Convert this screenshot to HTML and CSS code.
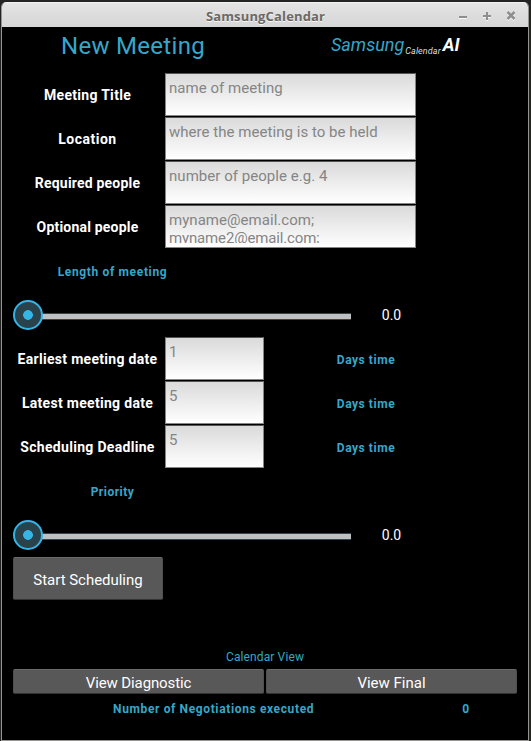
FILE: index.html
```html
<!DOCTYPE html>
<html lang="en">
<head>
<meta charset="utf-8">
<title>SamsungCalendar</title>
<link rel="stylesheet" href="styles.css">
</head>
<body>
<div class="window">
  <header class="titlebar">
    <span class="caption">SamsungCalendar</span>
    <svg class="controls" width="60" height="14" viewBox="0 0 60 14">
      <g class="glyph-light" transform="translate(0 1)"><path d="M2 8H10M26 7H34M30 3V11"/><path class="close" d="M50.500 3L57.500 10M57.500 3L50.500 10"/></g>
      <g class="glyph"><path d="M2 8H10M26 7H34M30 3V11"/><path class="close" d="M50.500 3L57.500 10M57.500 3L50.500 10"/></g>
    </svg>
  </header>
  <main class="content">
    <div class="heading">
      <h1>New Meeting</h1>
      <div class="brand"><i class="samsung">Samsung</i><i class="cal">Calendar</i><i class="ai">AI</i></div>
    </div>
    <div class="row"><label>Meeting Title</label><div class="input wide">name of meeting</div></div>
    <div class="row"><label class="loose">Location</label><div class="input wide">where the meeting is to be held</div></div>
    <div class="row"><label class="tight">Required people</label><div class="input wide">number of people e.g. 4</div></div>
    <div class="row"><label class="tight">Optional people</label><div class="input wide"><div class="lines">myname@email.com;<br><span class="second">myname2@email.com;</span></div></div></div>
    <div class="row section length">Length of meeting</div>
    <div class="row"><div class="slider"><div class="track"></div><div class="knob"></div></div><div class="value">0.0</div></div>
    <div class="row"><label>Earliest meeting date</label><div class="input">1</div><div class="unit">Days time</div></div>
    <div class="row"><label>Latest meeting date</label><div class="input">5</div><div class="unit">Days time</div></div>
    <div class="row"><label>Scheduling Deadline</label><div class="input">5</div><div class="unit">Days time</div></div>
    <div class="row section">Priority</div>
    <div class="row"><div class="slider"><div class="track"></div><div class="knob"></div></div><div class="value">0.0</div></div>
    <div class="button start">Start Scheduling</div>
    <div class="view-title">Calendar View</div>
    <div class="views"><div class="button diagnostic">View Diagnostic</div><div class="button">View Final</div></div>
    <div class="status"><div class="status-label">Number of Negotiations executed</div><div class="count">0</div></div>
  </main>
</div>
</body>
</html>
```
FILE: styles.css
```css
* { box-sizing: border-box; }
body { margin: 0; background: #242323; font-family: Roboto, "Liberation Sans", sans-serif; }
.window { width: 528px; height: 739px; margin: 2px 0 0 1px; background: #000; border: 1px solid #96948f; border-top: 0; border-radius: 5px 5px 0 0; overflow: hidden; }
.titlebar { position: relative; height: 25px; background: linear-gradient(#f3f3f3, #e3e3e3 2px, #d6d6d6); text-align: center; font: bold 13px/28px "Open Sans", sans-serif; color: #6c6864; text-shadow: 0 1px #f5f5f5; }
.caption { letter-spacing: 0.15px; margin-left: 1px; }
.controls { position: absolute; right: 11px; top: 7px; }
.glyph, .glyph-light { fill: none; stroke: #8e8e8e; stroke-width: 2; }
.glyph-light { stroke: #f7f7f7; }
.close { stroke-width: 2.5; }
.content { padding: 0 11px; }
.heading { height: 46px; display: flex; color: #36a7c9; }
h1 { width: 240px; margin: 0; text-align: center; font-size: 24px; font-weight: 400; line-height: 38px; letter-spacing: 0.3px; }
.brand { margin-left: 78px; display: flex; line-height: 36px; align-items: baseline; }
.samsung { font-size: 18px; }
.cal { font-size: 9px; letter-spacing: 0.1px; color: #ddd; position: relative; top: 3px; margin-left: 1px; }
.ai { font-size: 18px; font-weight: 700; color: #fff; margin-left: 2px; }
.row { height: 44px; display: flex; }
label { width: 149px; margin-right: 3px; text-align: center; line-height: 45px; font-size: 14px; font-weight: 700; letter-spacing: 0.3px; color: #fff; white-space: nowrap; }
.loose { letter-spacing: 0.5px; }
.tight { letter-spacing: 0.2px; }
.input { width: 99px; height: 43px; background: linear-gradient(#dadada, #fff); border: 1px solid #858585; border-top-color: #555; padding: 5px 0 0 3px; font-size: 15px; line-height: 19px; color: #858585; white-space: nowrap; }
.wide { width: 251px; letter-spacing: 0.04px; }
.lines { height: 32px; line-height: 18px; overflow: hidden; }
.second { letter-spacing: -0.15px; }
.section { width: 199px; justify-content: center; line-height: 46px; font-size: 12px; font-weight: 700; letter-spacing: 0.5px; color: #36a7c9; }
.length { letter-spacing: 0.65px; }
.slider { position: relative; width: 353px; padding-top: 20px; }
.track { width: 322px; margin-left: 16px; height: 7px; background: #c0c0c0; border: solid #33464f; border-width: 1px 0; }
.knob { position: absolute; left: 0; top: 6.5px; width: 30px; height: 30px; border: 2px solid #33b5e5; border-radius: 50%; background: radial-gradient(circle, #33b5e5 4.500px, #2a424b 5.200px); }
.value { width: 51px; text-align: center; color: #fff; font-size: 14px; line-height: 44px; }
.unit { width: 100px; margin-left: 52px; text-align: center; font-size: 12px; line-height: 46px; font-weight: 700; letter-spacing: 0.55px; color: #36a7c9; }
.button { background: #585858; border: 1px solid #505050; border-top-color: #6a6a6a; border-bottom-color: #333; border-radius: 2px; color: #fff; font-size: 15px; text-align: center; }
.start { width: 150px; height: 43px; line-height: 44px; letter-spacing: -0.03px; }
.view-title { margin-top: 45px; height: 24px; line-height: 25px; text-align: center; font-size: 12px; letter-spacing: 0.12px; color: #36a7c9; }
.views { display: flex; gap: 2px; }
.views .button { flex: 1; height: 25px; line-height: 26px; }
.diagnostic { letter-spacing: -0.12px; }
.status { display: flex; line-height: 30px; font-size: 12px; font-weight: 700; color: #36a7c9; }
.status-label { width: 402px; text-align: center; letter-spacing: 0.63px; }
.count { width: 103px; text-align: center; }
```
